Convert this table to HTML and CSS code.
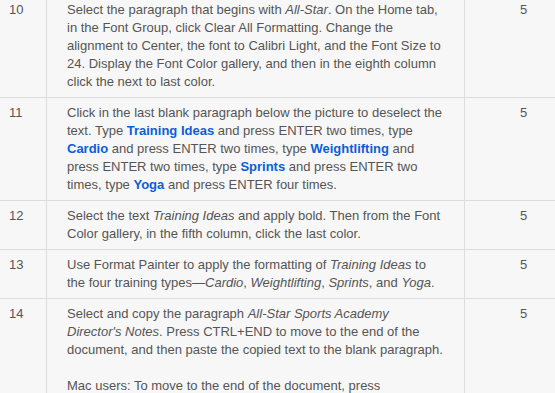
FILE: index.html
```html
<!DOCTYPE html>
<html>
<head>
<meta charset="utf-8">
<link rel="stylesheet" href="styles.css">
</head>
<body>
<div class="steps">
  <div class="row">
    <div class="cell num">10</div>
    <div class="cell text"><p>Select the paragraph that begins with <em>All-Star</em>. On the Home tab, in the Font Group, click Clear All Formatting. Change the alignment to Center, the font to Calibri Light, and the Font Size to 24. Display the Font Color gallery, and then in the eighth column click the next to last color.</p></div>
    <div class="cell pts">5</div>
  </div>
  <div class="row">
    <div class="cell num">11</div>
    <div class="cell text"><p>Click in the last blank paragraph below the picture to deselect the text. Type <strong>Training Ideas</strong> and press ENTER two times, type <strong>Cardio</strong> and press ENTER two times, type <strong>Weightlifting</strong> and press ENTER two times, type <strong>Sprints</strong> and press ENTER two times, type <strong>Yoga</strong> and press ENTER four times.</p></div>
    <div class="cell pts">5</div>
  </div>
  <div class="row">
    <div class="cell num">12</div>
    <div class="cell text"><p>Select the text <em>Training Ideas</em> and apply bold. Then from the Font Color gallery, in the fifth column, click the last color.</p></div>
    <div class="cell pts">5</div>
  </div>
  <div class="row">
    <div class="cell num">13</div>
    <div class="cell text"><p>Use Format Painter to apply the formatting of <em>Training Ideas</em> to the four training types—<em>Cardio</em>, <em>Weightlifting</em>, <em>Sprints</em>, and <em>Yoga</em>.</p></div>
    <div class="cell pts">5</div>
  </div>
  <div class="row">
    <div class="cell num">14</div>
    <div class="cell text"><p>Select and copy the paragraph <em>All-Star Sports Academy Director's Notes</em>. Press CTRL+END to move to the end of the document, and then paste the copied text to the blank paragraph.</p><p>Mac users: To move to the end of the document, press COMMAND+FN+RIGHT ARROW.</p></div>
    <div class="cell pts">5</div>
  </div>
</div>
</body>
</html>
```

FILE: styles.css
```css
html, body {
  margin: 0;
  padding: 0;
  background: #f7f7f7;
  overflow: hidden;
}
body {
  width: 555px;
  height: 393px;
  font-family: "Liberation Sans", Arial, sans-serif;
  font-size: 13px;
  line-height: 18px;
  color: #555555;
}
.steps {
  margin-top: -5px;
  width: 582px;
}
.row {
  display: grid;
  grid-template-columns: 47px 418px 117px;
}
.cell {
  box-sizing: border-box;
  border-bottom: 1px solid #dddddd;
  border-right: 1px solid #dddddd;
  padding: 6px 0;
}
.num {
  padding-left: 9px;
}
.text {
  padding-left: 20px;
  padding-right: 20px;
}
.text p {
  margin: 0;
}
.text p + p {
  margin-top: 18px;
}
.pts {
  text-align: center;
  border-right: none;
}
strong {
  color: #0b5ed7;
  font-weight: bold;
}
```
